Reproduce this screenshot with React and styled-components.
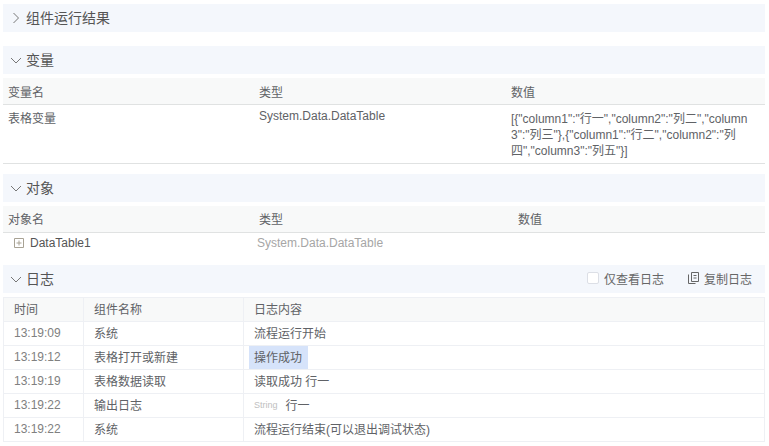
import React from 'react';
import styled, { createGlobalStyle } from 'styled-components';

const GlobalStyle = createGlobalStyle`
    html, body {
        margin: 0;
        padding: 0;
        background: #fff;
    }
    body {
        font-family: "Liberation Sans", "Noto Sans CJK SC", sans-serif;
        font-size: 12px;
        color: #606266;
    }
`;

const Page = styled.div`
    width: 769px;
    height: 446px;
    overflow: hidden;
    box-sizing: border-box;
    padding: 4px 4px 0 3px;
`;

const SectionBar = styled.div`
    display: flex;
    align-items: center;
    height: 28px;
    box-sizing: border-box;
    padding: 0 0 2px 7px;
    background: #f4f7fc;
    margin-top: ${({ top }) => top || 0}px;
    margin-bottom: 4px;
    font-size: 14px;
    color: #555;
`;

const Caret = styled.svg`
    width: 12px;
    height: 12px;
    margin: 2px 4px 0 0;
    flex: none;
    fill: none;
    stroke: #777;
    stroke-width: 1;
`;

const BarTools = styled.div`
    display: flex;
    align-items: center;
    margin-left: auto;
    padding-right: 13px;
    font-size: 12px;
    color: #666;
`;

const Tool = styled.span`
    display: flex;
    align-items: center;
    margin-left: ${({ gap }) => gap || 0}px;
`;

const CheckBox = styled.span`
    width: 10px;
    height: 10px;
    border: 1px solid #dcdfe6;
    border-radius: 2px;
    background: #fff;
    margin-right: 5px;
`;

const CopyIcon = styled.svg`
    width: 11px;
    height: 12px;
    margin-right: 5px;
    fill: none;
    stroke: #666;
    stroke-width: 1;
`;

const GridRow = styled.div`
    display: grid;
    grid-template-columns: 251px 252px 1fr;
    min-height: ${({ height }) => height}px;
    box-sizing: border-box;
    background: ${({ head }) => (head ? '#f8f9f9' : '#fff')};
    border-bottom: ${({ plain }) => (plain ? '0' : '1px solid #e0e2e2')};
`;

const Cell = styled.div`
    padding: ${({ top }) => top || 0}px 5px 0 ${({ left }) => left || 5}px;
    line-height: 16px;
    color: ${({ muted }) => (muted ? '#a6a6a6' : 'inherit')};
    word-break: break-all;
`;

const TreeCell = styled(Cell)`
    display: flex;
    align-items: flex-start;
    color: #555;
`;

const PlusIcon = styled.svg`
    width: 10px;
    height: 10px;
    margin: 3px 6px 0 6px;
    fill: none;
    stroke: #a8a294;
    stroke-width: 1;
`;

const ObjectBody = styled.div`
    height: 32px;
`;

const LogTable = styled.div`
    border: 1px solid #eef0f4;
`;

const LogRow = styled.div`
    display: grid;
    grid-template-columns: 80px 160px 1fr;
    height: 24px;
    box-sizing: border-box;
    background: ${({ head }) => (head ? '#f8f9f9' : '#fff')};
    border-bottom: 1px solid #eef0f4;
    &:last-child {
        height: 23px;
        border-bottom: 0;
    }
`;

const LogCell = styled.div`
    display: flex;
    align-items: center;
    padding: 0 0 2px 10px;
    color: ${({ muted }) => (muted ? '#808080' : '#606266')};
    &:not(:last-child) {
        border-right: 1px solid #eef0f4;
    }
`;

const Highlight = styled.span`
    display: flex;
    align-items: center;
    align-self: stretch;
    margin: 0 0 -2px -5px;
    padding: 0 6px 2px 5px;
    background: #d6e3fa;
`;

const TypeTag = styled.span`
    font-size: 9px;
    color: #c0c0c0;
    margin-right: 8px;
`;

const Right = () => (
    <Caret viewBox="0 0 12 12"><path d="M3.5 1l5 5-5 5" /></Caret>
);

const Down = () => (
    <Caret viewBox="0 0 12 12"><path d="M1 4l5 5 5-5" /></Caret>
);

const logRows = [
    { time: '13:19:09', name: '系统', content: '流程运行开始' },
    { time: '13:19:12', name: '表格打开或新建', content: <Highlight>操作成功</Highlight> },
    { time: '13:19:19', name: '表格数据读取', content: '读取成功 行一' },
    { time: '13:19:22', name: '输出日志', content: <><TypeTag>String</TypeTag>行一</> },
    { time: '13:19:22', name: '系统', content: '流程运行结束(可以退出调试状态)' },
];

const App = () => (
    <Page>
        <GlobalStyle />
        <SectionBar><Right />组件运行结果</SectionBar>

        <SectionBar top={14}><Down />变量</SectionBar>
        <GridRow head height={27}>
            <Cell top={7}>变量名</Cell>
            <Cell top={7}>类型</Cell>
            <Cell top={7}>数值</Cell>
        </GridRow>
        <GridRow height={59}>
            <Cell top={6}>表格变量</Cell>
            <Cell top={3}>System.Data.DataTable</Cell>
            <Cell top={6}>
                {'[{"column1":"行一","column2":"列二","column3":"列三"},{"column1":"行二","column2":"列四","column3":"列五"}]'}
            </Cell>
        </GridRow>

        <SectionBar top={10}><Down />对象</SectionBar>
        <GridRow head height={27}>
            <Cell top={6}>对象名</Cell>
            <Cell top={6}>类型</Cell>
            <Cell top={6} left={12}>数值</Cell>
        </GridRow>
        <ObjectBody>
            <GridRow plain height={21}>
                <TreeCell top={2} left={5}>
                    <PlusIcon viewBox="0 0 10 10">
                        <path d="M.5.5h9v9h-9zM2.5 5h5M5 2.5v5" />
                    </PlusIcon>
                    DataTable1
                </TreeCell>
                <Cell top={2} left={3} muted>System.Data.DataTable</Cell>
                <Cell />
            </GridRow>
        </ObjectBody>

        <SectionBar>
            <Down />日志
            <BarTools>
                <Tool><CheckBox />仅查看日志</Tool>
                <Tool gap={24}>
                    <CopyIcon viewBox="0 0 11 12">
                        <path d="M3.5.5h7v9h-7zM.5 2.5v9h7M5.5 3.5h3M5.5 6h3" />
                    </CopyIcon>
                    复制日志
                </Tool>
            </BarTools>
        </SectionBar>
        <LogTable>
            <LogRow head>
                <LogCell>时间</LogCell>
                <LogCell>组件名称</LogCell>
                <LogCell>日志内容</LogCell>
            </LogRow>
            {logRows.map((row, idx) => (
                <LogRow key={idx}>
                    <LogCell muted>{row.time}</LogCell>
                    <LogCell>{row.name}</LogCell>
                    <LogCell>{row.content}</LogCell>
                </LogRow>
            ))}
        </LogTable>
    </Page>
);

export default App;
